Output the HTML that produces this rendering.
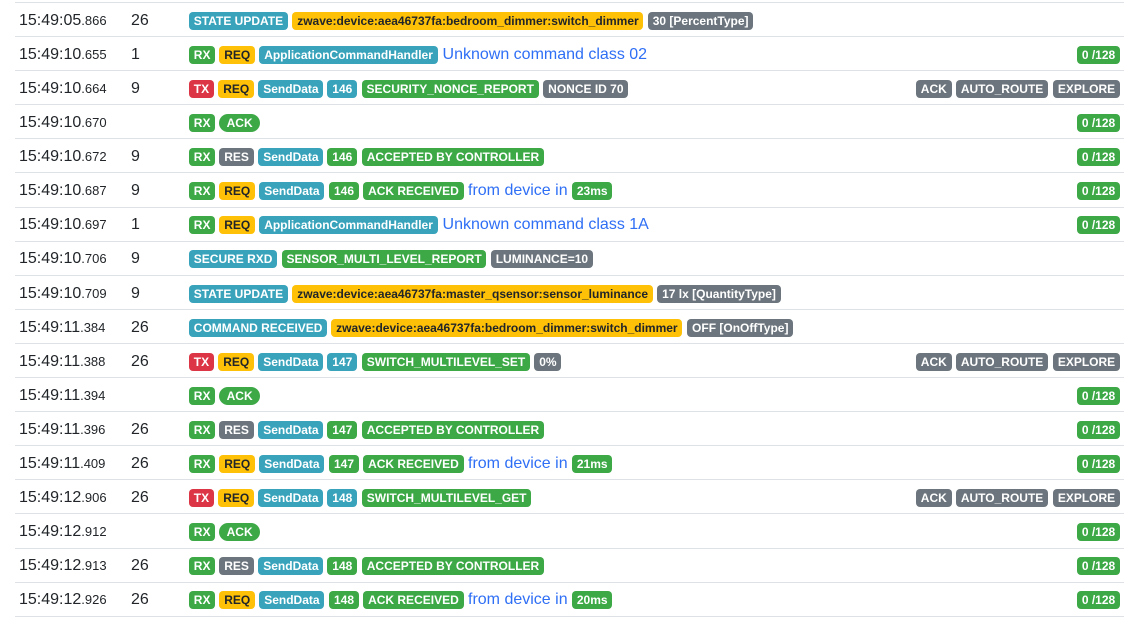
<!DOCTYPE html>
<html><head><meta charset="utf-8"><style>
html,body{margin:0;padding:0;background:#fff}
body{width:1139px;height:618px;overflow:hidden;position:relative;font-family:"Liberation Sans",sans-serif;font-size:16px;line-height:24px;color:#212529}
.r{position:absolute;left:15px;width:1109px;height:33px;border-top:1px solid #dee2e6;white-space:nowrap}
.r>div{position:absolute;top:6px}
.r.l>div{top:5px}
.t{left:4px}.n{left:116px}.m{left:174px}.e{right:4px}
small{font-size:13px}
.b{display:inline-block;font-size:12px;font-weight:700;line-height:12px;padding:3px 4.8px;border-radius:4px;color:#fff;vertical-align:baseline}
.g{background:#3ca846}.i{background:#38a3bb}.y{background:#ffc107;color:#212529}.s{background:#6c757d}.d{background:#dc3545}
.p{padding:3px 7.2px;border-radius:160px}
.u{color:#2f6ff5}
.g:first-child + .b{margin-left:-.3px;margin-right:.3px}
.g:first-child + .y + .i{margin-left:-.4px;margin-right:.4px}
.g:first-child + .s + .i + .g,.d:first-child + .y + .i + .i{margin-left:-.4px;margin-right:.4px}
.x{margin-left:-.4px;margin-right:.4px}
.w{margin-right:.5px}
</style></head><body>
<div class="r" style="top:2px"><div class="t">15:49:05<small>.866</small></div><div class="n">26</div><div class="m"><span class="b i">STATE UPDATE</span> <span class="b y">zwave:device:aea46737fa:bedroom_dimmer:switch_dimmer</span> <span class="b s">30 [PercentType]</span></div></div>
<div class="r" style="top:36px"><div class="t">15:49:10<small>.655</small></div><div class="n">1</div><div class="m"><span class="b g">RX</span> <span class="b y">REQ</span> <span class="b i">ApplicationCommandHandler</span> <span class="u">Unknown command class 02</span></div><div class="e"><span class="b g">0 /128</span></div></div>
<div class="r" style="top:70px"><div class="t">15:49:10<small>.664</small></div><div class="n">9</div><div class="m"><span class="b d">TX</span> <span class="b y">REQ</span> <span class="b i">SendData</span> <span class="b i">146</span> <span class="b g" style="margin-left:-.2px;margin-right:.2px">SECURITY_NONCE_REPORT</span> <span class="b s">NONCE ID 70</span></div><div class="e"><span class="b s">ACK</span> <span class="b s w">AUTO_ROUTE</span> <span class="b s">EXPLORE</span></div></div>
<div class="r" style="top:104px"><div class="t">15:49:10<small>.670</small></div><div class="m"><span class="b g">RX</span> <span class="b g p">ACK</span></div><div class="e"><span class="b g">0 /128</span></div></div>
<div class="r" style="top:138px"><div class="t">15:49:10<small>.672</small></div><div class="n">9</div><div class="m"><span class="b g">RX</span> <span class="b s">RES</span> <span class="b i">SendData</span> <span class="b g">146</span> <span class="b g">ACCEPTED BY CONTROLLER</span></div><div class="e"><span class="b g">0 /128</span></div></div>
<div class="r" style="top:172px"><div class="t">15:49:10<small>.687</small></div><div class="n">9</div><div class="m"><span class="b g">RX</span> <span class="b y">REQ</span> <span class="b i">SendData</span> <span class="b g">146</span> <span class="b g">ACK RECEIVED</span> <span class="u">from device in</span> <span class="b g">23ms</span></div><div class="e"><span class="b g">0 /128</span></div></div>
<div class="r l" style="top:207px"><div class="t">15:49:10<small>.697</small></div><div class="n">1</div><div class="m"><span class="b g">RX</span> <span class="b y">REQ</span> <span class="b i">ApplicationCommandHandler</span> <span class="u">Unknown command class 1A</span></div><div class="e"><span class="b g">0 /128</span></div></div>
<div class="r l" style="top:241px"><div class="t">15:49:10<small>.706</small></div><div class="n">9</div><div class="m"><span class="b i">SECURE RXD</span> <span class="b g">SENSOR_MULTI_LEVEL_REPORT</span> <span class="b s">LUMINANCE=10</span></div></div>
<div class="r" style="top:275px"><div class="t">15:49:10<small>.709</small></div><div class="n">9</div><div class="m"><span class="b i">STATE UPDATE</span> <span class="b y">zwave:device:aea46737fa:master_qsensor:sensor_luminance</span> <span class="b s">17 lx [QuantityType]</span></div></div>
<div class="r" style="top:309px"><div class="t">15:49:11<small>.384</small></div><div class="n">26</div><div class="m"><span class="b i">COMMAND RECEIVED</span> <span class="b y x">zwave:device:aea46737fa:bedroom_dimmer:switch_dimmer</span> <span class="b s">OFF [OnOffType]</span></div></div>
<div class="r" style="top:343px"><div class="t">15:49:11<small>.388</small></div><div class="n">26</div><div class="m"><span class="b d">TX</span> <span class="b y">REQ</span> <span class="b i">SendData</span> <span class="b i">147</span> <span class="b g">SWITCH_MULTILEVEL_SET</span> <span class="b s">0%</span></div><div class="e"><span class="b s">ACK</span> <span class="b s w">AUTO_ROUTE</span> <span class="b s">EXPLORE</span></div></div>
<div class="r" style="top:377px"><div class="t">15:49:11<small>.394</small></div><div class="m"><span class="b g">RX</span> <span class="b g p">ACK</span></div><div class="e"><span class="b g">0 /128</span></div></div>
<div class="r" style="top:411px"><div class="t">15:49:11<small>.396</small></div><div class="n">26</div><div class="m"><span class="b g">RX</span> <span class="b s">RES</span> <span class="b i">SendData</span> <span class="b g">147</span> <span class="b g">ACCEPTED BY CONTROLLER</span></div><div class="e"><span class="b g">0 /128</span></div></div>
<div class="r" style="top:445px"><div class="t">15:49:11<small>.409</small></div><div class="n">26</div><div class="m"><span class="b g">RX</span> <span class="b y">REQ</span> <span class="b i">SendData</span> <span class="b g">147</span> <span class="b g">ACK RECEIVED</span> <span class="u">from device in</span> <span class="b g">21ms</span></div><div class="e"><span class="b g">0 /128</span></div></div>
<div class="r" style="top:479px"><div class="t">15:49:12<small>.906</small></div><div class="n">26</div><div class="m"><span class="b d">TX</span> <span class="b y">REQ</span> <span class="b i">SendData</span> <span class="b i">148</span> <span class="b g">SWITCH_MULTILEVEL_GET</span></div><div class="e"><span class="b s">ACK</span> <span class="b s w">AUTO_ROUTE</span> <span class="b s">EXPLORE</span></div></div>
<div class="r" style="top:513px"><div class="t">15:49:12<small>.912</small></div><div class="m"><span class="b g">RX</span> <span class="b g p">ACK</span></div><div class="e"><span class="b g">0 /128</span></div></div>
<div class="r l" style="top:548px"><div class="t">15:49:12<small>.913</small></div><div class="n">26</div><div class="m"><span class="b g">RX</span> <span class="b s">RES</span> <span class="b i">SendData</span> <span class="b g">148</span> <span class="b g">ACCEPTED BY CONTROLLER</span></div><div class="e"><span class="b g">0 /128</span></div></div>
<div class="r l" style="top:582px"><div class="t">15:49:12<small>.926</small></div><div class="n">26</div><div class="m"><span class="b g">RX</span> <span class="b y">REQ</span> <span class="b i">SendData</span> <span class="b g">148</span> <span class="b g">ACK RECEIVED</span> <span class="u">from device in</span> <span class="b g">20ms</span></div><div class="e"><span class="b g">0 /128</span></div></div>
<div class="r" style="top:616px;height:1px"></div>
</body></html>
